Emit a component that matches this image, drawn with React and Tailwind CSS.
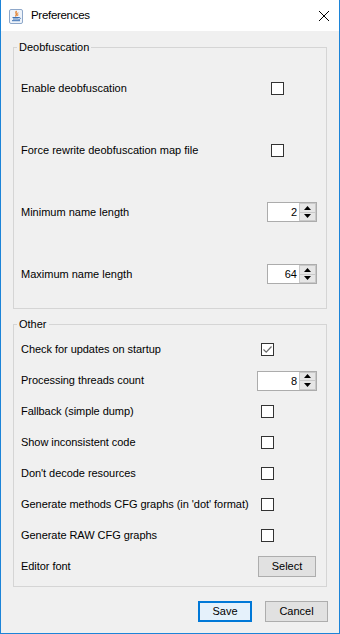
import React from "react";

const Checkbox = ({ checked }) => (
  <span className="flex h-[13px] w-[13px] items-center justify-center border border-[#333333] bg-white">
    {checked && (
      <svg width="11" height="11" viewBox="0 0 11 11">
        <path d="M1.5 5.5 L4.2 8.2 L9.5 2.5" stroke="#6b6b6b" strokeWidth="1.2" fill="none" />
      </svg>
    )}
  </span>
);

const Spinner = ({ value, width }) => (
  <div className={`flex h-[20px] border border-[#acacac] bg-white ${width}`}>
    <div className="flex-1 pr-[2px] text-right leading-[18px]">{value}</div>
    <div className="flex w-[17px] flex-col border border-[#c9c9c9] bg-[#e6e6e6]">
      <div className="flex flex-1 items-center justify-center border-b border-[#c9c9c9]">
        <svg width="7" height="4" viewBox="0 0 7 4">
          <path d="M3.5 0 L7 4 L0 4 Z" fill="#000" />
        </svg>
      </div>
      <div className="flex flex-1 items-center justify-center">
        <svg width="7" height="4" viewBox="0 0 7 4">
          <path d="M0 0 L7 0 L3.5 4 Z" fill="#000" />
        </svg>
      </div>
    </div>
  </div>
);

const JavaIcon = () => (
  <svg width="14" height="15" viewBox="0 0 14 15">
    <rect x="0.5" y="0.5" width="13" height="14" rx="1.5" fill="#eef3fa" stroke="#8ea7c9" />
    <path d="M7.5 2 C5.5 4 9 5 6.5 7.5" stroke="#e2761b" strokeWidth="1.3" fill="none" />
    <path d="M9 3.5 C8 5 9.5 5.5 8.5 7" stroke="#e2761b" strokeWidth="0.9" fill="none" />
    <path d="M3.5 8.5 H10 M4 10 H9.5 M3 11.7 H11" stroke="#3d72b4" strokeWidth="1" />
    <path d="M10 8.5 C12 8.5 12 10.5 9.5 10.5" stroke="#3d72b4" strokeWidth="0.9" fill="none" />
  </svg>
);

const deobRows = [
  { label: "Enable deobfuscation", type: "check" },
  { label: "Force rewrite deobfuscation map file", type: "check" },
  { label: "Minimum name length", type: "spin", value: "2" },
  { label: "Maximum name length", type: "spin", value: "64" },
];

const otherRows = [
  { label: "Check for updates on startup", type: "check", checked: true },
  { label: "Processing threads count", type: "spin", value: "8" },
  { label: "Fallback (simple dump)", type: "check" },
  { label: "Show inconsistent code", type: "check" },
  { label: "Don't decode resources", type: "check" },
  { label: "Generate methods CFG graphs (in 'dot' format)", type: "check" },
  { label: "Generate RAW CFG graphs", type: "check" },
  { label: "Editor font", type: "button" },
];

const App = () => {
  return (
    <div className="flex h-[634px] w-[340px] flex-col border-x border-b border-[#1c84d8] font-['Liberation_Sans',Arial,sans-serif] text-[11px] text-black">
      {/* Title bar */}
      <div className="flex h-[31px] shrink-0 items-center bg-white">
        <div className="ml-[8px] mt-[1px]">
          <JavaIcon />
        </div>
        <span className="ml-[8px] text-[11.5px] tracking-[-0.3px]">Preferences</span>
        <svg className="ml-auto mr-[10px]" width="10" height="10" viewBox="0 0 10 10">
          <path d="M0 0 L10 10 M10 0 L0 10" stroke="#000" strokeWidth="1" />
        </svg>
      </div>

      {/* Body */}
      <div className="flex flex-1 flex-col bg-[#f0f0f0] px-[12px] pt-[10px]">
        <fieldset className="border border-[#d5d5d5]">
          <legend className="ml-[3px] px-[2px] leading-[13px]">Deobfuscation</legend>
          <div className="flex flex-col pb-[3px] pl-[7px] pr-[9px] pt-[3px]">
            {deobRows.map((row) => (
              <div key={row.label} className="flex h-[62px] items-center">
                <span className="flex-1">{row.label}</span>
                <div className="w-[50px]">
                  {row.type === "check" ? (
                    <div className="ml-[4px]">
                      <Checkbox />
                    </div>
                  ) : (
                    <Spinner value={row.value} width="w-[50px]" />
                  )}
                </div>
              </div>
            ))}
          </div>
        </fieldset>

        <fieldset className="mt-[9px] border border-[#d5d5d5]">
          <legend className="ml-[3px] px-[2px] leading-[13px]">Other</legend>
          <div className="flex flex-col pb-[4px] pl-[7px] pr-[9px] pt-[3px]">
            {otherRows.map((row) => (
              <div key={row.label} className="flex h-[31px] items-center">
                <span className="flex-1 tracking-[-0.05px]">{row.label}</span>
                <div className="w-[60px]">
                  {row.type === "check" && (
                    <div className="ml-[4px]">
                      <Checkbox checked={row.checked} />
                    </div>
                  )}
                  {row.type === "spin" && <Spinner value={row.value} width="w-[60px]" />}
                  {row.type === "button" && (
                    <button className="ml-[1px] h-[21px] w-[58px] border border-[#adadad] bg-[#e1e1e1] text-[11px]">
                      Select
                    </button>
                  )}
                </div>
              </div>
            ))}
          </div>
        </fieldset>

        <div className="mr-[-1px] mt-[14px] flex justify-end gap-[13px]">
          <button className="h-[21px] w-[54px] border-2 border-[#0078d7] bg-[#e5f1fb] text-[11px]">
            Save
          </button>
          <button className="h-[21px] w-[63px] border border-[#adadad] bg-[#e1e1e1] text-[11px]">
            Cancel
          </button>
        </div>
      </div>
    </div>
  );
};

export default App;
